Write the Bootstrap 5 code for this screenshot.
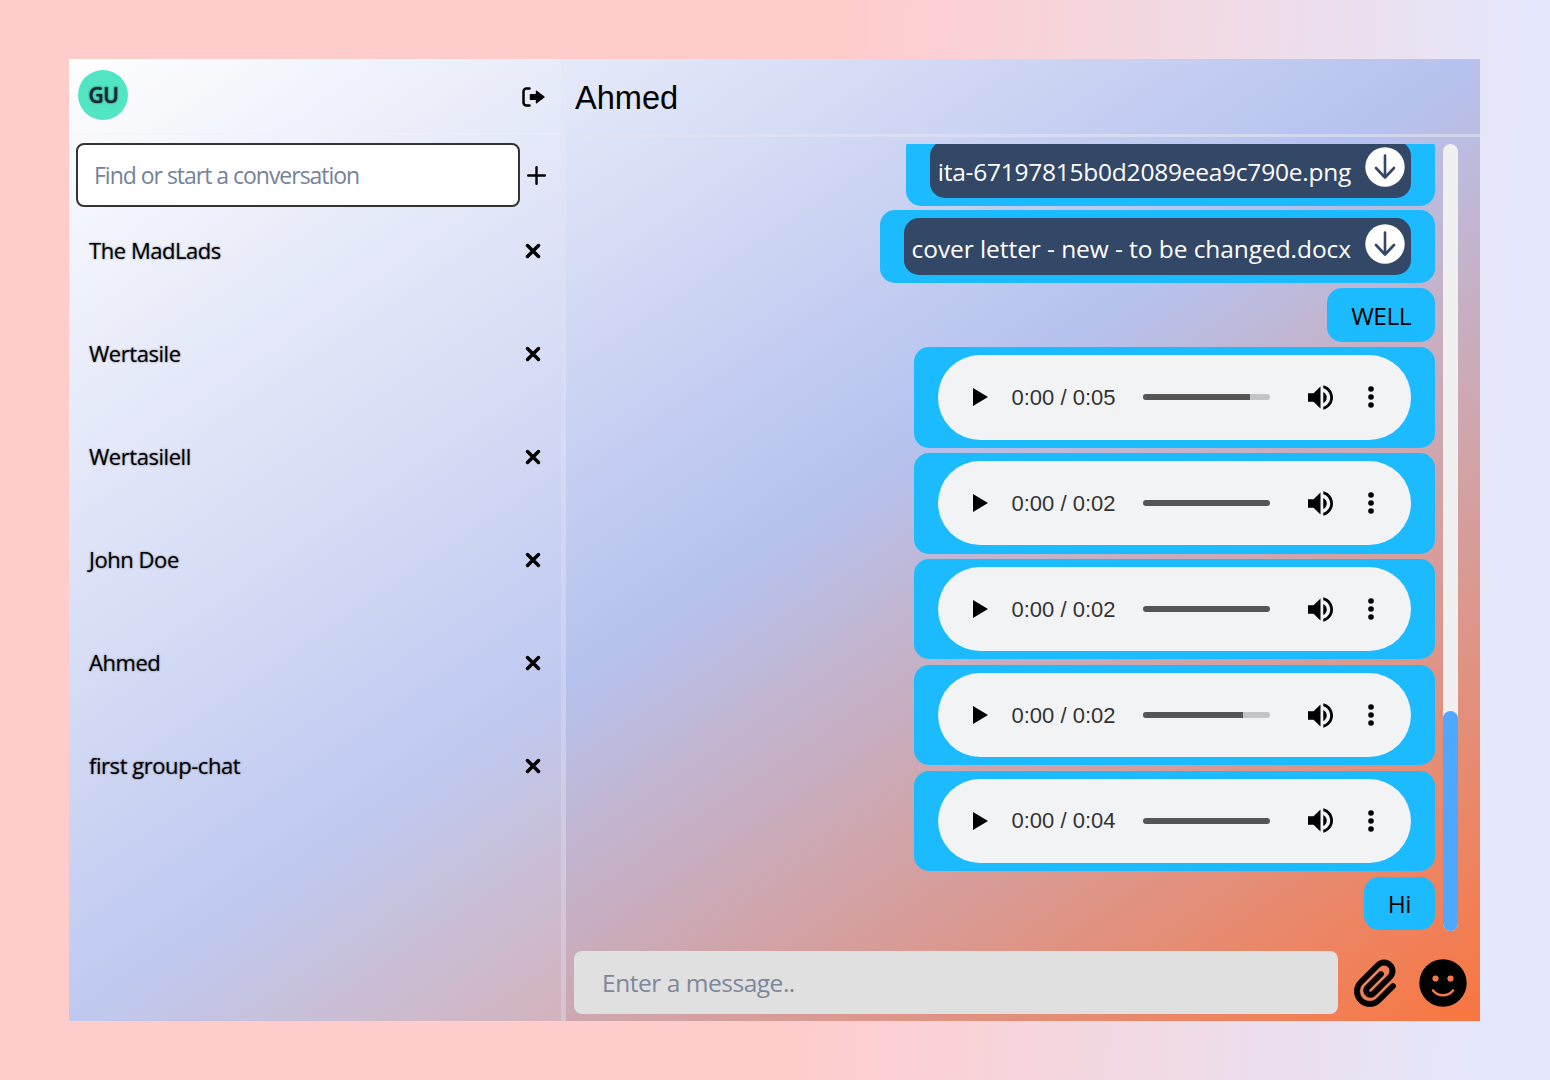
<!DOCTYPE html>
<html lang="en">
<head>
<meta charset="utf-8">
<title>Chat</title>
<link rel="stylesheet" href="https://cdn.jsdelivr.net/npm/bootstrap@5.3.0/dist/css/bootstrap.min.css">
<style>
body{width:1550px;height:1080px;overflow:hidden;padding:59px 70px 59px 69px;color:#000;font-family:"Open Sans","Noto Sans",sans-serif;background:linear-gradient(93deg,#ffcccc 0%,#ffcccc 53%,#e4e7fc 96%,#e4e7fc 100%)}
svg{display:block;flex:none}
.chat-app{height:962px;background:linear-gradient(to bottom right,#fff 0%,#b6c2ee 50%,#f97641 100%)}
.side-pane{width:497px;border-right:5px solid rgba(225,228,242,.32);background:rgba(255,255,255,.13)}
.side-top{height:76px;padding:0 16px 2px 9px;border-bottom:2px solid rgba(240,240,245,.35)}
.avatar-dot{width:50px;height:50px;border-radius:50%;background:#52e5c4;font-size:21px;font-weight:600;letter-spacing:-.5px;color:#1c2733;text-shadow:0 0 2px #123;padding:2px 0 0 1px}
.side-find{padding:8px 15px 0 7px}
.find-box{width:444px;height:64px;border:2px solid #333;border-radius:8px;background:#fff;color:#74839a;font-size:23px;letter-spacing:-1.02px;padding:1px 0 0 16px}
.talk-list{margin-top:-8px}
.talk-row{height:103px;padding:0 20px;font-size:22px;letter-spacing:-.45px;text-shadow:0 0 2px rgba(0,0,0,.55)}
.chat-top{height:78px;border-bottom:3px solid rgba(225,228,242,.6);padding:2px 9px 0;font:32.6px "Liberation Sans",Arial,sans-serif}
.feed{height:787px;margin-top:7px;gap:8px;padding-right:22px}
.msg-list{gap:5.3px;overflow:hidden;padding-bottom:1px}
.bubble{background:#1cbbff;border-radius:15px;padding:8.2px 24px;flex:none;font-size:24.5px}
.bubble-text{height:53.5px;padding-top:2px;padding-bottom:0;letter-spacing:-.5px}
.file-chip{height:56.5px;border-radius:15px;background:#334766;color:#fff;padding:0 6px 0 8px;gap:14px}
.file-bubble + .file-bubble{margin-top:-1px}
.file-chip span{padding-top:5px}
.file-chip svg{margin-top:-5px}
.name-tight{letter-spacing:-.24px}
.name-loose{letter-spacing:-.07px}
.player{width:473.500px;height:84.2px;border-radius:42px;background:#f1f3f5;padding-left:35px;color:#333}
.time-label{font:22px "Liberation Sans",Arial,sans-serif;width:104px;margin:0 27px 0 24px;padding-top:1px;white-space:nowrap}
.track{width:127px;height:6px;border-radius:3px;background:#c3c4c6;overflow:hidden}
.track-fill{height:6px;background:#555}
.icon-vol{margin:0 35px 0 38px}
.scroll-rail{width:15px;border-radius:8px;background:#f0f0f0}
.scroll-thumb{height:220px;border-radius:8px;background:#4fa8ff}
.composer{padding:20px 13px 0 8px}
.msg-box{width:764px;height:63px;border-radius:8px;background:#e0e0e0;color:#7d8799;font-size:24.5px;letter-spacing:-.47px;padding:1px 0 0 28px}
.icon-clip{margin:0 auto 0 16px}
</style>
</head>
<body>
<svg width="0" height="0" class="position-absolute">
<symbol id="i-x" viewBox="0 0 16 16"><path d="M2.500 2.500l11 11M13.500 2.500l-11 11" stroke="#000" stroke-width="3.500" stroke-linecap="round"/></symbol>
<symbol id="i-down" viewBox="0 0 40 40"><circle cx="20" cy="20" r="19.700" fill="#fff"/><path d="M20 8.500V30M11 21l9 9.500 9-9.500" fill="none" stroke="#334766" stroke-width="2.600" stroke-linecap="round" stroke-linejoin="round"/></symbol>
<symbol id="i-play" viewBox="0 0 15 18"><path d="M0 0v18l15-9z"/></symbol>
<symbol id="i-vol" viewBox="3 3 18 18"><path d="M3 9v6h4l5 5V4L7 9H3zm13.500 3c0-1.770-1.020-3.290-2.500-4.030v8.050c1.480-.73 2.500-2.250 2.500-4.020zM14 3.230v2.060c2.890.86 5 3.540 5 6.710s-2.110 5.850-5 6.710v2.060c4.010-.91 7-4.490 7-8.770s-2.990-7.860-7-8.770z"/></symbol>
<symbol id="i-dots" viewBox="0 0 6 24"><circle cx="3" cy="4" r="2.800"/><circle cx="3" cy="12" r="2.800"/><circle cx="3" cy="20" r="2.800"/></symbol>
</svg>
<main class="chat-app d-flex">
<aside class="side-pane flex-shrink-0">
<div class="side-top d-flex align-items-center justify-content-between">
<div class="avatar-dot d-flex align-items-center justify-content-center">GU</div>
<svg class="mt-1" width="23" height="20" viewBox="0 0 23 20"><path d="M7.500 1.500H4.500a3 3 0 0 0-3 3v11a3 3 0 0 0 3 3h3" fill="none" stroke="#000" stroke-width="2.500" stroke-linecap="round"/><path d="M8.500 7.600h6V4.200L22 10l-7.500 5.800v-3.400h-6z" stroke="#000" stroke-width="1.400" stroke-linejoin="round"/></svg>
</div>
<div class="side-find d-flex align-items-center justify-content-between">
<div class="find-box d-flex align-items-center">Find or start a conversation</div>
<svg width="19" height="19" viewBox="0 0 19 19"><path d="M9.500 1.200v16.600M1.200 9.500h16.600" stroke="#000" stroke-width="2.400" stroke-linecap="round"/></svg>
</div>
<div class="talk-list">
<div class="talk-row d-flex justify-content-between align-items-center"><span>The MadLads</span><svg width="16" height="16"><use href="#i-x"/></svg></div>
<div class="talk-row d-flex justify-content-between align-items-center"><span>Wertasile</span><svg width="16" height="16"><use href="#i-x"/></svg></div>
<div class="talk-row d-flex justify-content-between align-items-center"><span>Wertasilell</span><svg width="16" height="16"><use href="#i-x"/></svg></div>
<div class="talk-row d-flex justify-content-between align-items-center"><span>John Doe</span><svg width="16" height="16"><use href="#i-x"/></svg></div>
<div class="talk-row d-flex justify-content-between align-items-center"><span>Ahmed</span><svg width="16" height="16"><use href="#i-x"/></svg></div>
<div class="talk-row d-flex justify-content-between align-items-center"><span>first group-chat</span><svg width="16" height="16"><use href="#i-x"/></svg></div>
</div>
</aside>
<section class="flex-grow-1">
<header class="chat-top d-flex align-items-center">Ahmed</header>
<div class="feed d-flex">
<div class="msg-list d-flex flex-column flex-grow-1 align-items-end justify-content-end">
<div class="bubble file-bubble"><div class="file-chip d-flex align-items-center"><span class="name-tight">ita-67197815b0d2089eea9c790e.png</span><svg width="40" height="40"><use href="#i-down"/></svg></div></div>
<div class="bubble file-bubble"><div class="file-chip d-flex align-items-center"><span class="name-loose">cover letter - new - to be changed.docx</span><svg width="40" height="40"><use href="#i-down"/></svg></div></div>
<div class="bubble bubble-text d-flex align-items-center">WELL</div>
<div class="bubble"><div class="player d-flex align-items-center"><svg width="15" height="18"><use href="#i-play"/></svg><span class="time-label">0:00 / 0:05</span><div class="track"><div class="track-fill" style="width:85%"></div></div><svg class="icon-vol" width="25" height="25"><use href="#i-vol"/></svg><svg width="6" height="24"><use href="#i-dots"/></svg></div></div>
<div class="bubble"><div class="player d-flex align-items-center"><svg width="15" height="18"><use href="#i-play"/></svg><span class="time-label">0:00 / 0:02</span><div class="track"><div class="track-fill" style="width:100%"></div></div><svg class="icon-vol" width="25" height="25"><use href="#i-vol"/></svg><svg width="6" height="24"><use href="#i-dots"/></svg></div></div>
<div class="bubble"><div class="player d-flex align-items-center"><svg width="15" height="18"><use href="#i-play"/></svg><span class="time-label">0:00 / 0:02</span><div class="track"><div class="track-fill" style="width:100%"></div></div><svg class="icon-vol" width="25" height="25"><use href="#i-vol"/></svg><svg width="6" height="24"><use href="#i-dots"/></svg></div></div>
<div class="bubble"><div class="player d-flex align-items-center"><svg width="15" height="18"><use href="#i-play"/></svg><span class="time-label">0:00 / 0:02</span><div class="track"><div class="track-fill" style="width:79%"></div></div><svg class="icon-vol" width="25" height="25"><use href="#i-vol"/></svg><svg width="6" height="24"><use href="#i-dots"/></svg></div></div>
<div class="bubble"><div class="player d-flex align-items-center"><svg width="15" height="18"><use href="#i-play"/></svg><span class="time-label">0:00 / 0:04</span><div class="track"><div class="track-fill" style="width:100%"></div></div><svg class="icon-vol" width="25" height="25"><use href="#i-vol"/></svg><svg width="6" height="24"><use href="#i-dots"/></svg></div></div>
<div class="bubble bubble-text d-flex align-items-center">Hi</div>
</div>
<div class="scroll-rail d-flex flex-column justify-content-end"><div class="scroll-thumb"></div></div>
</div>
<div class="composer d-flex align-items-center">
<div class="msg-box d-flex align-items-center">Enter a message..</div>
<svg class="icon-clip" width="42" height="48" viewBox="0 0 448 512"><path d="M364.200 83.800c-24.400-24.400-64-24.400-88.400 0l-184 184c-42.100 42.100-42.100 110.300 0 152.400s110.300 42.100 152.400 0l152-152c10.900-10.900 28.700-10.900 39.600 0s10.900 28.700 0 39.600l-152 152c-64 64-167.600 64-231.600 0s-64-167.600 0-231.600l184-184c46.300-46.300 121.300-46.300 167.600 0s46.300 121.300 0 167.600l-176 176c-28.600 28.600-75 28.600-103.600 0s-28.600-75 0-103.600l144-144c10.900-10.900 28.700-10.900 39.600 0s10.900 28.700 0 39.600l-144 144c-6.700 6.700-6.700 17.700 0 24.400s17.700 6.700 24.400 0l176-176c24.400-24.400 24.400-64 0-88.400z" stroke="#000" stroke-width="8"/></svg>
<svg width="48" height="48" viewBox="0 0 48 48"><circle cx="24" cy="24" r="23.700"/><g fill="#f47a49"><circle cx="16.500" cy="19.500" r="3.100"/><circle cx="31.500" cy="19.500" r="3.100"/></g><path d="M14 31.500c5.500 6.400 14.500 6.400 20 0" fill="none" stroke="#f47a49" stroke-width="2.600" stroke-linecap="round"/></svg>
</div>
</section>
</main>
<script src="https://cdn.jsdelivr.net/npm/bootstrap@5.3.0/dist/js/bootstrap.bundle.min.js"></script>
</body>
</html>
